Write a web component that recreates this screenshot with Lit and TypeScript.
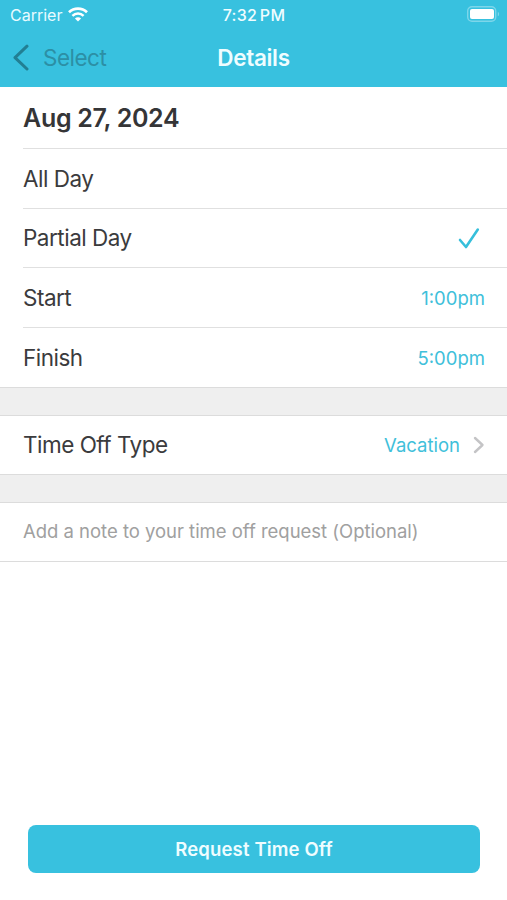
import { LitElement, html, css, svg } from "lit";
import { customElement, property } from "lit/decorators.js";

const wifi = html`<svg class="wifi" width="20" height="15" viewBox="0 0 20 15" fill="none">
  ${svg`<path d="M1 5.2C6 .4 14 .4 19 5.2" stroke="#fff" stroke-width="2.7"/>
  <path d="M4.4 8.8C7.6 5.8 12.4 5.8 15.6 8.8" stroke="#fff" stroke-width="2.5"/>
  <path d="M10 14.6L6.9 11.5C8.6 9.9 11.4 9.9 13.1 11.5Z" fill="#fff"/>`}
</svg>`;

const battery = html`<svg width="35" height="18" viewBox="0 0 35 18" fill="none">
  <rect x="1.7" y="1.7" width="28" height="14.6" rx="4.3" stroke="#fff" stroke-opacity=".35" stroke-width="1.4"/>
  <rect x="4" y="4" width="24" height="10" rx="2" fill="#fff"/>
  <path d="M31.8 6.7C33.6 7.5 33.6 10.5 31.8 11.3Z" fill="#fff" fill-opacity=".35"/>
</svg>`;

const back = html`<svg width="18" height="28" viewBox="0 0 18 28" fill="none">
  <path d="M15 3.2L3 14.6L15 26" stroke="#227f93" stroke-width="3" stroke-linejoin="round" stroke-linecap="round"/>
</svg>`;

const check = html`<svg class="check" width="24" height="24" viewBox="0 0 24 24" fill="none">
  <path d="M3 14L9 21L20.8 3.6" stroke="#36bfdb" stroke-width="2.6" stroke-linecap="round" stroke-linejoin="round"/>
</svg>`;

const chevron = html`<svg class="chevron" width="12" height="18" viewBox="0 0 12 18" fill="none">
  <path d="M2 2L9.5 9L2 16" stroke="#c4c4c6" stroke-width="2.4" stroke-linecap="round" stroke-linejoin="round"/>
</svg>`;

@customElement("detail-row")
export class DetailRow extends LitElement {
  @property() label = "";
  @property() value = "";

  static styles = css`
    :host { display: flex; align-items: center; justify-content: space-between; height: 100%; }
    .label { font-size: 22.5px; letter-spacing: -0.5px; color: #3b3b3d; }
    .side { display: flex; align-items: center; padding-top: 1px; }
    .value { font-size: 18.5px; letter-spacing: 0; color: #40c0da; }
  `;

  render() {
    return html`<span class="label">${this.label}</span>
      <span class="side"><span class="value">${this.value}</span><slot></slot></span>`;
  }
}

@customElement("app-root")
export class AppRoot extends LitElement {
  static styles = css`
    :host {
      display: flex; flex-direction: column; height: 900px; background: #fff;
      font-family: Inter, "Liberation Sans", sans-serif; white-space: nowrap; color: #353537;
    }
    * { box-sizing: border-box; }
    svg { display: block; flex: none; }
    header { height: 87px; background: #38c1df; color: #fff; flex: none; }
    .status { height: 28px; display: grid; grid-template-columns: 1fr auto 1fr; align-items: center; padding: 0 6px 0 10px; }
    .carrier { display: flex; align-items: center; gap: 6px; font-size: 16px; color: #e8fbff; padding-top: 1px; }
    .clock { font-size: 16px; font-weight: 500; padding: 2px 3px 0 0; letter-spacing: 0.3px; word-spacing: -2px; color: #f0fdff; }
    .power { display: flex; justify-content: flex-end; }
    .nav { height: 58px; display: grid; grid-template-columns: 1fr auto 1fr; align-items: center; padding: 0 12px; }
    .back { display: flex; align-items: center; gap: 13px; font-size: 22.5px; letter-spacing: -0.5px; color: #2c8fa5; }
    .title { font-size: 22.5px; font-weight: 600; letter-spacing: -0.3px; color: #effdff; }
    .rows { padding-left: 23px; border-bottom: 1px solid #dcdcdc; }
    .row { height: 59.5px; padding-right: 22px; border-bottom: 1px solid #e0e0e0; }
    .row:last-child { border-bottom: 0; }
    .row.single { height: 58px; padding-bottom: 2px; }
    .date { height: 62px; display: flex; align-items: center; font-size: 25px; font-weight: 600; letter-spacing: -0.3px; }
    .gap { height: 28px; background: #efefef; border-bottom: 1px solid #dcdcdc; }
    .check { margin-right: 4px; }
    .chevron { margin-left: 13px; }
    .note { height: 58px; padding-bottom: 2px; display: flex; align-items: center; font-size: 18.5px; letter-spacing: -0.02px; color: #a0a0a0; }
    button {
      margin: auto 27px 27px 28px; height: 48px; border: 0; border-radius: 8px; padding: 0;
      background: #38c1df; color: #effdff; font: 600 18.5px Inter, "Liberation Sans", sans-serif;
      letter-spacing: 0.15px;
    }
  `;

  render() {
    return html`
      <header>
        <div class="status">
          <div class="carrier"><span class="network">Carrier</span>${wifi}</div>
          <span class="clock">7:32 PM</span>
          <div class="power">${battery}</div>
        </div>
        <div class="nav">
          <div class="back">${back}<span class="select">Select</span></div>
          <span class="title">Details</span>
        </div>
      </header>
      <section class="rows">
        <div class="row date"><span>Aug 27, 2024</span></div>
        <div class="row"><detail-row label="All Day"></detail-row></div>
        <div class="row"><detail-row label="Partial Day">${check}</detail-row></div>
        <div class="row"><detail-row label="Start" value="1:00pm"></detail-row></div>
        <div class="row"><detail-row label="Finish" value="5:00pm"></detail-row></div>
      </section>
      <div class="gap"></div>
      <section class="rows">
        <div class="row single"><detail-row label="Time Off Type" value="Vacation">${chevron}</detail-row></div>
      </section>
      <div class="gap"></div>
      <section class="rows"><div class="note"><span>Add a note to your time off request (Optional)</span></div></section>
      <button>Request Time Off</button>
    `;
  }
}
